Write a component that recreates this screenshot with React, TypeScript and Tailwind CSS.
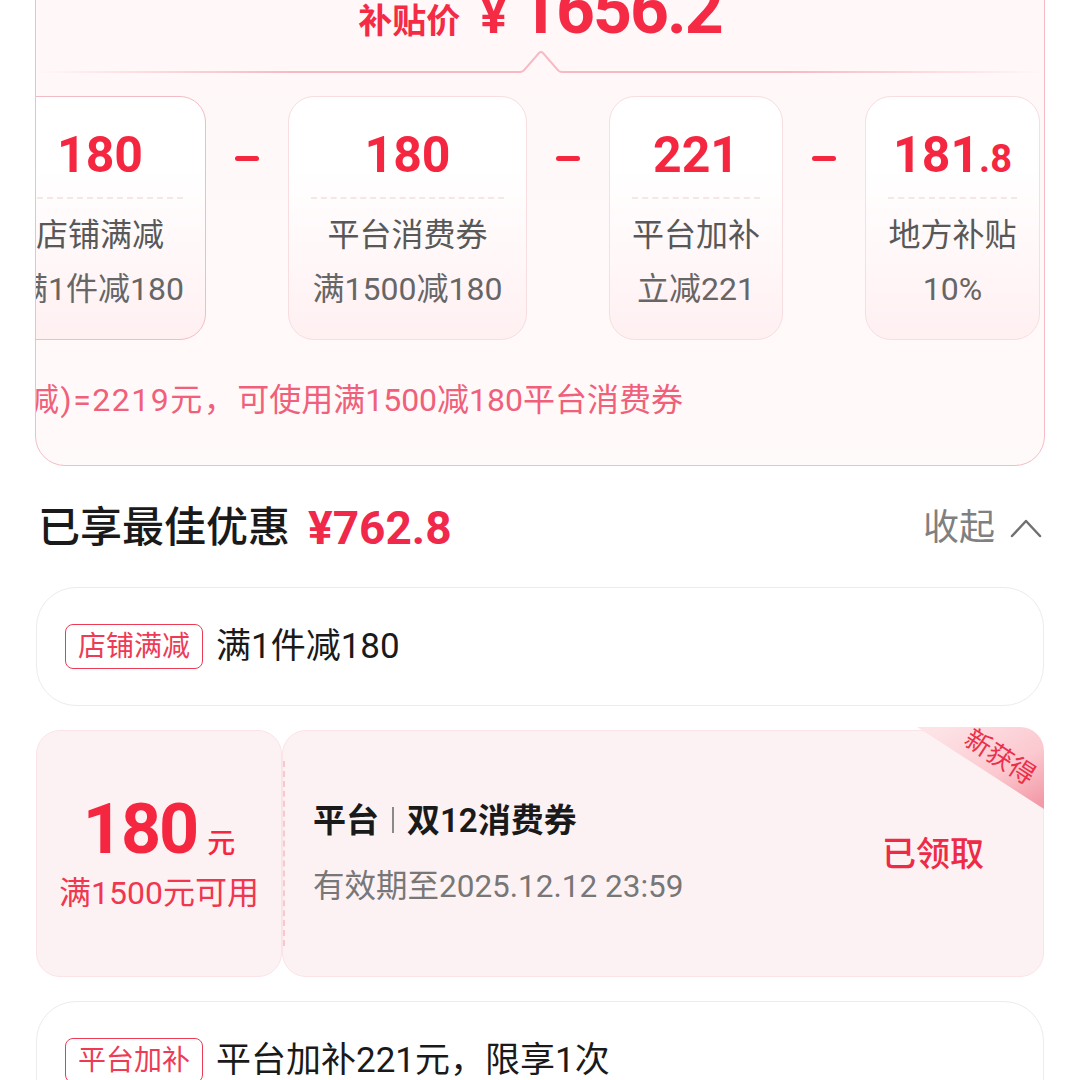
import React from "react";

function Minus() {
  return (
    <div className="w-[82px] shrink-0 flex justify-center pt-[60px]">
      <div className="w-[24px] h-[5px] rounded-full bg-[#f5263f]" />
    </div>
  );
}

function Card({
  cls,
  num,
  small,
  label,
  sub,
}: {
  cls: string;
  num: string;
  small?: string;
  label: string;
  sub: string;
}) {
  return (
    <div
      className={`shrink-0 h-[244px] rounded-[26px] border bg-gradient-to-b from-white from-30% to-[#fff0f2] flex flex-col items-center pt-[26px] ${cls}`}
    >
      <div className="h-[64px] flex items-center justify-center">
        <div className="flex items-baseline text-[#f5263f] font-bold leading-none">
          <span className="text-[50px]">{num}</span>
          {small && <span className="text-[38px]">{small}</span>}
        </div>
      </div>
      <div className="mt-[10px] self-stretch mx-[22px] border-t-2 border-dashed border-[#f5e6e8]" />
      <div className="mt-[16px] h-[40px] leading-[40px] text-[32px] text-[#585858] whitespace-nowrap">
        {label}
      </div>
      <div className="mt-[14px] h-[40px] leading-[40px] text-[32px] text-[#666] whitespace-nowrap">
        {sub}
      </div>
    </div>
  );
}

function Tag({ children }: { children: React.ReactNode }) {
  return (
    <div className="h-[45px] px-[12px] border-[1.5px] border-[#ee3b55] rounded-[8px] text-[28px] text-[#ee3b55] leading-none flex items-center whitespace-nowrap">
      {children}
    </div>
  );
}

export default function App() {
  return (
    <div className="w-[1080px] h-[1080px] overflow-hidden bg-white font-['Roboto','Noto_Sans_CJK_SC',sans-serif]">
      {/* Top panel */}
      <div className="-mt-[60px] ml-[35px] w-[1010px] h-[526px] rounded-b-[30px] border border-[#f6bcc5] bg-gradient-to-b from-[#fff7f8] to-[#fffafa] overflow-hidden flex flex-col">
        <div className="h-[103px] shrink-0 flex items-end justify-center">
          <div className="flex items-baseline leading-none text-[#f52b45] font-bold">
            <span className="text-[34px] mr-[20px]">补贴价</span>
            <span className="text-[50px] mr-[12px]">¥</span>
            <span className="text-[68px] tracking-[-2px]">1656.2</span>
          </div>
        </div>
        <svg className="mt-[4px] shrink-0" width="1008" height="26" viewBox="0 0 1008 26">
          <defs>
            <linearGradient id="lg" x1="0" y1="0" x2="1" y2="0">
              <stop offset="0" stopColor="#f5b3bd" stopOpacity="0" />
              <stop offset="0.25" stopColor="#f5b3bd" stopOpacity="0.9" />
              <stop offset="0.75" stopColor="#f5b3bd" stopOpacity="0.9" />
              <stop offset="1" stopColor="#f5b3bd" stopOpacity="0" />
            </linearGradient>
          </defs>
          <path
            d="M0 24 H484 Q487 24 489 21 L503 5 Q505 3 507 5 L521 21 Q523 24 526 24 H1008"
            fill="none"
            stroke="url(#lg)"
            strokeWidth="2"
          />
        </svg>
        <div className="mt-[22px] -ml-[42px] flex items-start shrink-0">
          <Card cls="w-[212px] border-[#f2bcc5]" num="180" label="店铺满减" sub="满1件减180" />
          <Minus />
          <Card cls="w-[239px] border-[#f8dde1]" num="180" label="平台消费券" sub="满1500减180" />
          <Minus />
          <Card cls="w-[174px] border-[#f8dde1]" num="221" label="平台加补" sub="立减221" />
          <Minus />
          <Card cls="w-[175px] border-[#f8dde1]" num="181" small=".8" label="地方补贴" sub="10%" />
        </div>
        <div className="mt-[38px] -ml-[9px] h-[44px] leading-[44px] text-[32px] text-[#f0607a] whitespace-nowrap">
          <span className="tracking-[1.5px]">减)=2219元，</span>可使用满1500减180平台消费券
        </div>
      </div>

      {/* Header */}
      <div className="mt-[32px] h-[60px] px-[38px] flex items-center">
        <span className="text-[42px] font-medium text-[#1a1a1a] leading-none">已享最佳优惠</span>
        <span className="ml-[18px] text-[46px] font-bold text-[#f0284a] leading-none">¥762.8</span>
        <span className="ml-auto text-[36px] text-[#808080] leading-none">收起</span>
        <svg className="ml-[15px]" width="32" height="24" viewBox="0 0 32 24">
          <polyline
            points="2,20 16,5 30,20"
            fill="none"
            stroke="#707070"
            strokeWidth="2.5"
            strokeLinecap="round"
            strokeLinejoin="round"
          />
        </svg>
      </div>

      {/* List */}
      <div className="mx-[36px] flex flex-col">
        <div className="mt-[29px] h-[119px] rounded-[40px] border border-[#ececec] bg-white flex items-center pl-[28px] gap-[13px]">
          <Tag>店铺满减</Tag>
          <span className="text-[35px] text-[#1a1a1a] leading-none">满1件减180</span>
        </div>

        <div className="mt-[24px] h-[247px] flex">
          <div className="w-[246px] shrink-0 rounded-[24px] bg-[#fdf2f3] border border-[#fbe4e7] flex flex-col items-center justify-center">
            <div className="h-[70px] flex items-baseline text-[#f5263f] leading-none">
              <span className="text-[70px] font-bold tracking-[-2px]">180</span>
              <span className="ml-[10px] text-[28px] font-medium">元</span>
            </div>
            <div className="mt-[9px] h-[40px] leading-[40px] text-[32px] text-[#f0374f]">满1500元可用</div>
          </div>
          <div className="relative flex-1 rounded-[24px] bg-[#fdf2f3] border border-[#fbe4e7] flex items-center">
            <div className="h-[185px] border-l-2 border-dashed border-[#f6c9d0]" />
            <div className="pl-[28px] flex flex-col">
              <div className="h-[44px] flex items-center text-[33px] font-semibold text-[#1a1a1a] leading-none">
                <span>平台</span>
                <span className="mx-[13px] w-[2px] h-[26px] bg-[#8a8a8a]" />
                <span>双12消费券</span>
              </div>
              <div className="mt-[23px] h-[44px] leading-[44px] text-[31.5px] text-[#777]">有效期至2025.12.12 23:59</div>
            </div>
            <span className="ml-auto mr-[59px] text-[34px] font-medium text-[#ee2b47] leading-none">已领取</span>
            <div className="absolute -top-[4px] -right-[1px] w-[127px] h-[82px] overflow-hidden rounded-tr-[24px]">
              <svg width="127" height="82" viewBox="0 0 127 82" className="absolute inset-0">
                <defs>
                  <linearGradient id="rb" x1="0.2" y1="0" x2="1" y2="0.9">
                    <stop offset="0" stopColor="#fde3e6" />
                    <stop offset="0.6" stopColor="#fbc8cf" />
                    <stop offset="1" stopColor="#f39aa7" />
                  </linearGradient>
                </defs>
                <polygon points="0,0 127,0 127,82" fill="url(#rb)" />
              </svg>
              <span className="absolute left-[83px] top-[30px] -translate-x-1/2 -translate-y-1/2 rotate-[33deg] text-[26px] text-[#ec2f4a] leading-none whitespace-nowrap">
                新获得
              </span>
            </div>
          </div>
        </div>

        <div className="mt-[24px] h-[119px] rounded-[40px] border border-[#ececec] bg-white flex items-center pl-[28px] gap-[13px]">
          <Tag>平台加补</Tag>
          <span className="text-[35px] text-[#1a1a1a] leading-none">平台加补221元，限享1次</span>
        </div>
      </div>
    </div>
  );
}
